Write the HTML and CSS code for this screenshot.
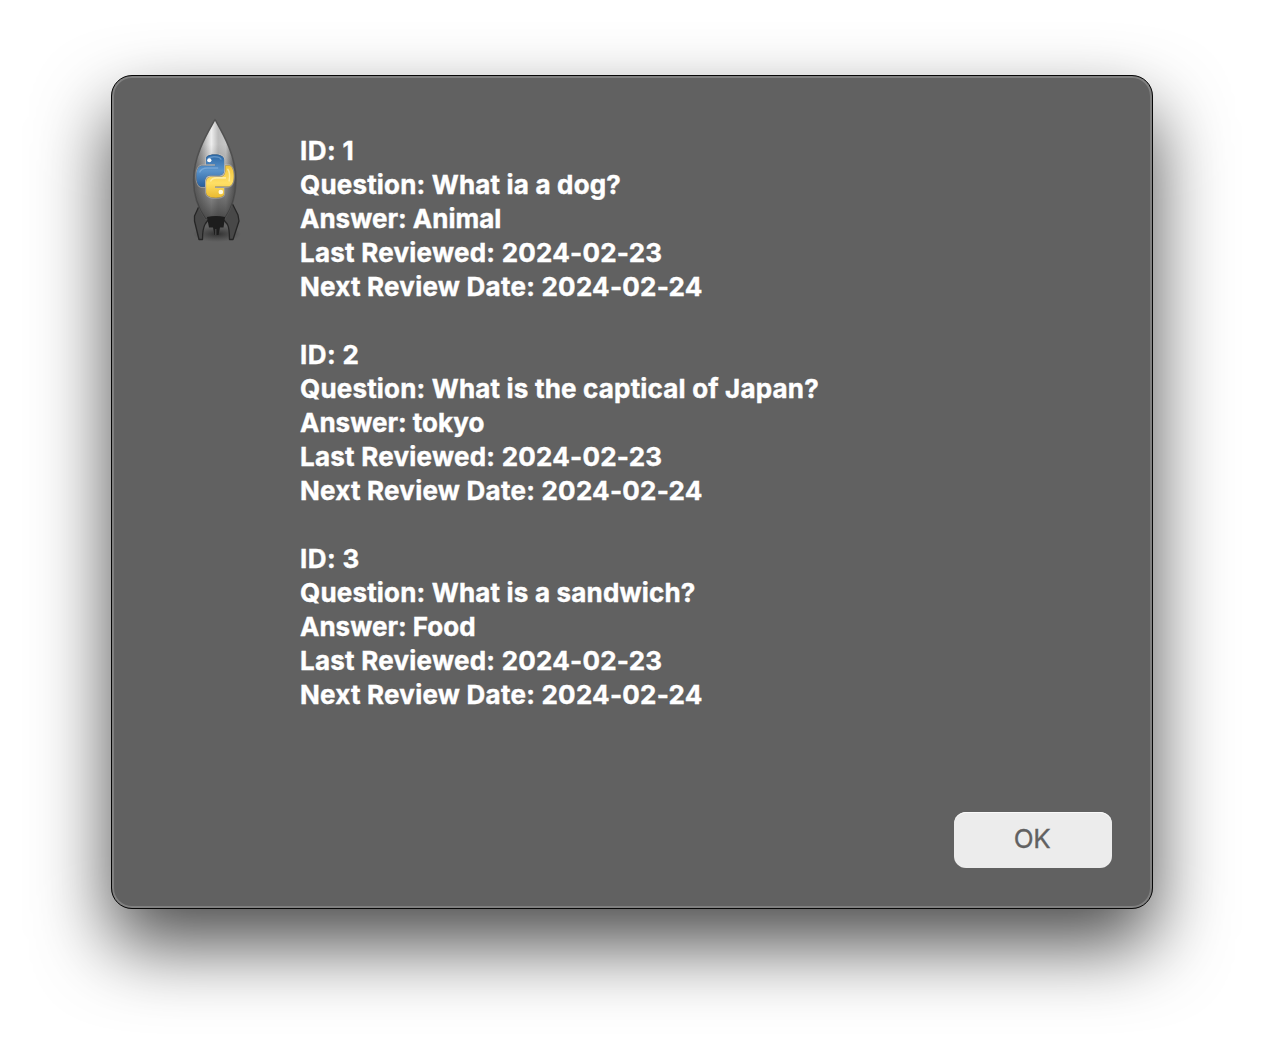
FILE: index.html
```html
<!DOCTYPE html>
<html lang="en">
<head>
<meta charset="utf-8">
<title>Flashcards</title>
<link rel="stylesheet" href="styles.css">
</head>
<body>
<main class="dialog" role="alertdialog">
  <div class="content">
    <svg class="rocket" width="70" height="140" viewBox="0 0 70 140" aria-hidden="true">
      <defs>
        <linearGradient id="metal">
          <stop offset="0" stop-color="#666"/><stop offset=".2" stop-color="#a2a2a2"/><stop offset=".42" stop-color="#eee"/><stop offset=".58" stop-color="#bbb"/><stop offset=".76" stop-color="#c6c6c6"/><stop offset="1" stop-color="#505050"/>
        </linearGradient>
        <linearGradient id="shade" x2="0" y2="1">
          <stop offset=".25" stop-color="#444" stop-opacity="0"/><stop offset=".72" stop-color="#444" stop-opacity=".55"/><stop offset="1" stop-color="#333" stop-opacity=".85"/>
        </linearGradient>
        <linearGradient id="blue" x2="0" y2="1"><stop stop-color="#2b67a5"/><stop offset=".5" stop-color="#5b94cb"/><stop offset="1" stop-color="#285f9c"/></linearGradient>
        <linearGradient id="yellow" x2="0" y2="1"><stop stop-color="#e9b92f"/><stop offset=".45" stop-color="#ffdf65"/><stop offset="1" stop-color="#f1c33a"/></linearGradient>
        <radialGradient id="ground"><stop stop-color="#222" stop-opacity=".8"/><stop offset="1" stop-color="#333" stop-opacity="0"/></radialGradient>
        <path id="hull" d="M35 9.500C28 22 13.500 45 13.500 70c0 16 5 29 12 39q9.500-3 19 0c7-10 11.500-23 11.500-39C56 45 42 22 35 9.500z"/>
        <path id="snake" d="M14.25.18l.9.2.73.26.59.3.45.32.34.34.25.34.16.33.1.3.04.26.02.2-.01.13V8.5l-.05.63-.13.55-.21.46-.26.38-.3.31-.33.25-.35.19-.35.14-.33.1-.3.07-.26.04-.21.02H8.77l-.69.05-.59.14-.5.22-.41.27-.33.32-.27.35-.2.36-.15.37-.1.35-.07.32-.04.27-.02.21v3.06H3.17l-.21-.03-.28-.07-.32-.12-.35-.18-.36-.26-.36-.36-.35-.46-.32-.59-.28-.73-.21-.88-.14-1.05-.05-1.23.06-1.22.16-1.04.24-.87.32-.71.36-.57.4-.44.42-.33.42-.24.4-.16.36-.1.32-.05.24-.01h.16l.06.01h8.16v-.83H6.18l-.01-2.75-.02-.37.05-.34.11-.31.17-.28.25-.26.31-.23.38-.2.44-.18.51-.15.58-.12.64-.1.71-.06.77-.04.84-.02 1.27.05z"/>
      </defs>
      <ellipse cx="37" cy="124" rx="24" ry="8" fill="url(#ground)"/>
      <g fill="#484848" stroke="#252525" stroke-width="1.3" stroke-linejoin="round">
        <path d="M20 94 14.500 106v5l4.500 18.500h3.500c0-7 1-13 3-16l3-4z"/>
        <path d="M52 93l6 12 1 6-6 18.500h-3.500c0-7-1-13-2-15l-4-5z"/>
        <use href="#hull" fill="url(#metal)" stroke="#505050" stroke-width="1.500"/>
      </g>
      <use href="#hull" fill="url(#shade)"/>
      <path d="M27 107q9-2 18 0l-1.500 10.500H40l-1.500 7.500h-4L33 117.500h-4z" fill="#1d1d1d"/>
      <path d="M35.800 119v6" stroke="#505050" stroke-width="1"/>
      <g transform="translate(16.500 44.500) scale(1.550 1.800)" stroke-linejoin="round">
        <g stroke="#cfcfcf" stroke-opacity=".4" stroke-width="1.300">
          <use href="#snake"/><use href="#snake" transform="rotate(180 12 12)"/>
        </g>
        <use href="#snake" fill="url(#blue)"/>
        <use href="#snake" transform="rotate(180 12 12)" fill="url(#yellow)"/>
        <path d="M7 4q0-2.500 4-2.700t5 1.500M2 10q1-2.500 5-2.500h7" fill="none" stroke="#a8cdf0" stroke-opacity=".4" stroke-width=".8"/>
        <path d="M20 8q2 2 1 7M9 15q1-2 4-2h6" fill="none" stroke="#fff5bd" stroke-opacity=".7" stroke-width=".9"/>
        <ellipse cx="8.300" cy="3.200" rx="1.350" ry="1.150" fill="#fff"/>
        <ellipse cx="15.700" cy="20.800" rx="1.500" ry="1.250" fill="#fffbe0"/>
      </g>
    </svg>
    <div class="cards">
      <div class="card">
        <div class="id">ID: 1</div>
        <div>Question: What ia a dog?</div>
        <div class="answer">Answer: Animal</div>
        <div class="date">Last Reviewed: 2024-02-23</div>
        <div class="date">Next Review Date: 2024-02-24</div>
      </div>
      <div class="card">
        <div class="id">ID: 2</div>
        <div>Question: What is the captical of Japan?</div>
        <div class="answer">Answer: tokyo</div>
        <div class="date">Last Reviewed: 2024-02-23</div>
        <div class="date">Next Review Date: 2024-02-24</div>
      </div>
      <div class="card">
        <div class="id">ID: 3</div>
        <div>Question: What is a sandwich?</div>
        <div class="answer">Answer: Food</div>
        <div class="date">Last Reviewed: 2024-02-23</div>
        <div class="date">Next Review Date: 2024-02-24</div>
      </div>
    </div>
  </div>
  <button class="ok" type="button">OK</button>
</main>
</body>
</html>
```
FILE: styles.css
```css
* { box-sizing: border-box; }
body {
  margin: 0;
  height: 1056px;
  padding: 75px 111px;
  overflow: hidden;
  background: #fff;
  font-family: Inter, "Liberation Sans", sans-serif;
}
.dialog {
  display: flex;
  flex-direction: column;
  justify-content: space-between;
  width: 1042px;
  height: 834px;
  padding: 34px 40px 40px 68px;
  border: 1px solid #080808;
  border-radius: 21px;
  background: #616161;
  box-shadow: inset 0 0 0 2px #808080, 0 36px 74px rgba(0, 0, 0, .7);
}
.content { display: flex; }
.rocket { flex: none; }
.cards {
  padding: 24px 0 0 50px;
  color: #fff;
  font-size: 26px;
  font-weight: 700;
  line-height: 34px;
  letter-spacing: .18px;
  white-space: nowrap;
  -webkit-text-stroke: .4px #fff;
}
.card { margin-bottom: 34px; }
.id { letter-spacing: .4px; }
.answer { letter-spacing: 0; }
.date { letter-spacing: .24px; }
.ok {
  align-self: flex-end;
  width: 158px;
  height: 56px;
  padding: 0 2px 3px 0;
  border: 0;
  border-radius: 12px;
  background: #ececec;
  box-shadow: inset 0 1px #fafafa;
  color: #616161;
  font-family: inherit;
  font-size: 26px;
  letter-spacing: -.3px;
  -webkit-text-stroke: .3px #616161;
}
```
